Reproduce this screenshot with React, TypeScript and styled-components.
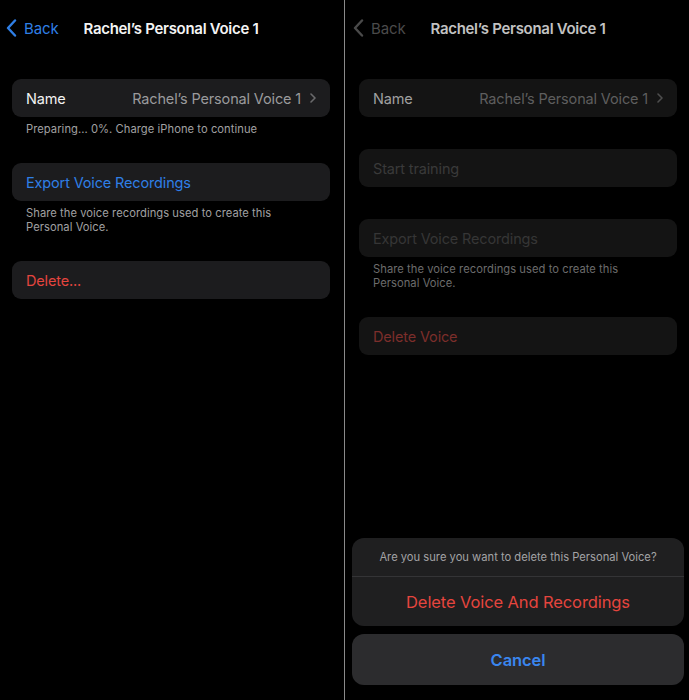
import { ReactNode } from 'react';
import styled, { createGlobalStyle, css } from 'styled-components';

const GlobalStyle = createGlobalStyle`
  * { box-sizing: border-box; }
  html, body { margin: 0; padding: 0; background: #000; }
  body {
    font-family: Inter, 'Noto Sans', 'Liberation Sans', sans-serif;
    -webkit-font-smoothing: antialiased;
  }
`;

// colours for the live screen and the one dimmed behind the sheet
const live = {
  back: '#2f7fe6',
  title: '#f4f4f4',
  row: '#1c1c1e',
  label: '#f2f2f2',
  value: '#9a9a9c',
  chevron: '#6a6a6c',
  footer: '#a0a0a2',
  blue: '#2f7fe6',
  red: '#e5453e',
  muted: '#555',
};

const dim = {
  back: '#4a4a4a',
  title: '#c2c2c2',
  row: '#141414',
  label: '#a0a0a0',
  value: '#5e5e5e',
  chevron: '#4e4e4e',
  footer: '#6c6c6c',
  blue: '#363636',
  red: '#7c2e2b',
  muted: '#3a3a3a',
};

type Palette = typeof live;

const Page = styled.div`
  display: flex;
  width: 689px;
  height: 700px;
  background: #000;
  overflow: hidden;
`;

const Screen = styled.div<{ $left: number; $right: number }>`
  display: flex;
  flex-direction: column;
  width: 344px;
  height: 700px;
  padding: 0 ${(p) => p.$right}px 0 ${(p) => p.$left}px;
`;

const Divider = styled.div`
  width: 1px;
  height: 700px;
  background: #8a8a8a;
`;

const NavBar = styled.div`
  position: relative;
  display: flex;
  align-items: center;
  justify-content: center;
  height: 56px;
  margin-bottom: 23px;
`;

const BackButton = styled.div<{ $color: string; $offset: number }>`
  position: absolute;
  left: ${(p) => p.$offset}px;
  top: 0;
  height: 56px;
  display: flex;
  align-items: center;
  gap: 7px;
  color: ${(p) => p.$color};
  font-size: 15px;
  letter-spacing: -0.1px;
`;

const Title = styled.div<{ $color: string }>`
  color: ${(p) => p.$color};
  font-size: 15px;
  font-weight: 600;
  letter-spacing: -0.3px;
`;

const Content = styled.div`
  display: flex;
  flex-direction: column;
  gap: 32px;
`;

const Section = styled.div``;

const Row = styled.div<{ $bg: string }>`
  display: flex;
  align-items: center;
  justify-content: space-between;
  height: 38px;
  padding: 0 14px;
  border-radius: 9px;
  background: ${(p) => p.$bg};
`;

const RowText = styled.span<{ $color: string }>`
  color: ${(p) => p.$color};
  font-size: 14.5px;
  letter-spacing: -0.15px;
`;

const Value = styled.span<{ $color: string }>`
  display: flex;
  align-items: center;
  gap: 9px;
  color: ${(p) => p.$color};
  font-size: 14.5px;
  letter-spacing: -0.15px;
`;

const Footer = styled.div<{ $color: string }>`
  padding: 5px 14px 0;
  margin-bottom: -5px;
  color: ${(p) => p.$color};
  font-size: 11.2px;
  line-height: 14px;
  letter-spacing: 0.05px;
`;

const SheetArea = styled.div`
  margin: auto -7px 0;
  display: flex;
  flex-direction: column;
  gap: 8px;
  padding-bottom: 15px;
`;

const SheetGroup = styled.div`
  border-radius: 12px;
  background: #1f1f20;
  overflow: hidden;
`;

const SheetMessage = styled.div`
  height: 39px;
  display: flex;
  align-items: center;
  justify-content: center;
  color: #a3a3a5;
  font-size: 11.2px;
  border-bottom: 1px solid #343436;
`;

const sheetButton = css`
  display: flex;
  align-items: center;
  justify-content: center;
  font-size: 16.5px;
  letter-spacing: -0.1px;
`;

const SheetAction = styled.div`
  ${sheetButton};
  height: 49px;
  color: #e5453e;
`;

const CancelButton = styled.div`
  ${sheetButton};
  height: 51px;
  border-radius: 12px;
  background: #2c2c2e;
  color: #3a86ee;
  font-weight: 600;
`;

const BackChevron = ({ color }: { color: string }) => (
  <svg width="11" height="18" viewBox="0 0 11 18" fill="none">
    <path
      d="M9 1.5L2 9l7 7.5"
      stroke={color}
      strokeWidth="2.4"
      strokeLinecap="round"
      strokeLinejoin="round"
    />
  </svg>
);

const RowChevron = ({ color }: { color: string }) => (
  <svg width="6" height="10" viewBox="0 0 6 10" fill="none">
    <path
      d="M1 1l4 4-4 4"
      stroke={color}
      strokeWidth="1.6"
      strokeLinecap="round"
      strokeLinejoin="round"
    />
  </svg>
);

interface NavProps {
  c: Palette;
  backOffset: number;
}

const Nav = ({ c, backOffset }: NavProps) => (
  <NavBar>
    <BackButton $color={c.back} $offset={backOffset}>
      <BackChevron color={c.back} />
      Back
    </BackButton>
    <Title $color={c.title}>Rachel’s Personal Voice 1</Title>
  </NavBar>
);

const NameRow = ({ c }: { c: Palette }) => (
  <Row $bg={c.row}>
    <RowText $color={c.label}>Name</RowText>
    <Value $color={c.value}>
      Rachel’s Personal Voice 1
      <RowChevron color={c.chevron} />
    </Value>
  </Row>
);

const PlainRow = ({ c, color, children }: { c: Palette; color: string; children: ReactNode }) => (
  <Row $bg={c.row}>
    <RowText $color={color}>{children}</RowText>
  </Row>
);

const exportNote = (
  <>
    Share the voice recordings used to create this
    <br />
    Personal Voice.
  </>
);

export default function App() {
  return (
    <>
      <GlobalStyle />
      <Page>
        <Screen $left={12} $right={14}>
          <Nav c={live} backOffset={-6} />
          <Content>
            <Section>
              <NameRow c={live} />
              <Footer $color={live.footer}>Preparing... 0%. Charge iPhone to continue</Footer>
            </Section>
            <Section>
              <PlainRow c={live} color={live.blue}>
                Export Voice Recordings
              </PlainRow>
              <Footer $color={live.footer}>{exportNote}</Footer>
            </Section>
            <Section>
              <PlainRow c={live} color={live.red}>
                Delete...
              </PlainRow>
            </Section>
          </Content>
        </Screen>
        <Divider />
        <Screen $left={14} $right={12}>
          <Nav c={dim} backOffset={-6} />
          <Content>
            <Section>
              <NameRow c={dim} />
            </Section>
            <Section>
              <PlainRow c={dim} color={dim.muted}>
                Start training
              </PlainRow>
            </Section>
            <Section>
              <PlainRow c={dim} color={dim.blue}>
                Export Voice Recordings
              </PlainRow>
              <Footer $color={dim.footer}>{exportNote}</Footer>
            </Section>
            <Section>
              <PlainRow c={dim} color={dim.red}>
                Delete Voice
              </PlainRow>
            </Section>
          </Content>
          <SheetArea>
            <SheetGroup>
              <SheetMessage>Are you sure you want to delete this Personal Voice?</SheetMessage>
              <SheetAction>Delete Voice And Recordings</SheetAction>
            </SheetGroup>
            <CancelButton>Cancel</CancelButton>
          </SheetArea>
        </Screen>
      </Page>
    </>
  );
}
